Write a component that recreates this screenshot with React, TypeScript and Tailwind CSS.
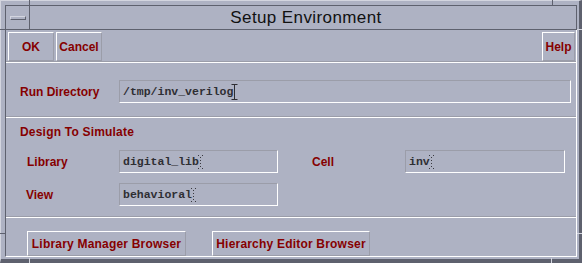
import React from "react";

const label = "font-['Liberation_Sans',Arial,sans-serif] font-bold text-[12px] text-[#860000] leading-none";
const mono = "font-['Liberation_Mono','Courier_New',monospace] font-bold text-[11.5px] text-[#2e2e33] leading-none";

function Caret({ active }: { active?: boolean }) {
  return (
    <svg width="7" height="16" viewBox="0 0 7 16" className="-ml-[2px] shrink-0">
      {active ? (
        <g stroke="#2e2e33" strokeWidth="1" fill="none">
          <path d="M0.5 0.5h6M3.5 0.5v15M0.5 15.5h6" />
        </g>
      ) : (
        <g fill="#3a3a40">
          <rect x="1" y="1" width="1" height="1" />
          <rect x="5" y="1" width="1" height="1" />
          <rect x="3" y="3" width="1" height="1" />
          <rect x="3" y="6" width="1" height="1" />
          <rect x="3" y="9" width="1" height="1" />
          <rect x="3" y="12" width="1" height="1" />
          <rect x="1" y="14" width="1" height="1" />
          <rect x="5" y="14" width="1" height="1" />
        </g>
      )}
    </svg>
  );
}

function Field({ value, className, active }: { value: string; className: string; active?: boolean }) {
  return (
    <div
      className={`h-[23px] flex items-center pl-[3px] border border-t-[#9b9da9] border-l-[#9b9da9] border-r-white border-b-white ${className}`}
    >
      <span className={mono}>{value}</span>
      <Caret active={active} />
    </div>
  );
}

function Btn({ children, className }: { children: React.ReactNode; className: string }) {
  return (
    <button
      className={`flex items-center justify-center border border-t-white border-l-white border-r-[#9b9da9] border-b-[#9b9da9] ${label} ${className}`}
    >
      {children}
    </button>
  );
}

function Sep() {
  return <div className="h-[2px] border-t border-t-[#9b9da9] border-b border-b-white" />;
}

export default function App() {
  return (
    <div className="relative w-[582px] h-[263px] bg-[#aeb2c3] border-t border-l border-t-[#d3d5df] border-l-[#d3d5df] border-r-[3px] border-b-[4px] border-r-[#5e616e] border-b-[#5e616e] pl-[4px] pt-[4px] pr-[2px] pb-[2px] select-none">
      {/* frame corner marks */}
      <div className="absolute left-[28px] top-[-1px] w-px h-[5px] bg-[#5e616e]" />
      <div className="absolute left-[551px] top-[-1px] w-px h-[5px] bg-[#5e616e]" />
      <div className="absolute left-[-1px] top-[28px] w-[5px] h-px bg-[#5e616e]" />
      <div className="absolute right-[-3px] top-[28px] w-[5px] h-px bg-[#d3d5df]" />
      <div className="absolute left-[-1px] top-[232px] w-[5px] h-px bg-[#5e616e]" />
      <div className="absolute right-[-3px] top-[232px] w-[5px] h-px bg-[#d3d5df]" />
      <div className="absolute left-[28px] bottom-[-4px] w-px h-[5px] bg-[#d3d5df]" />
      <div className="absolute left-[550px] bottom-[-4px] w-px h-[5px] bg-[#d3d5df]" />

      {/* title bar */}
      <div className="h-[25px] flex border border-[#5e616e]">
        <div className="w-[24px] flex items-center justify-center border-r border-r-[#5e616e]">
          <div className="w-[16px] h-[4px] border border-t-[#d3d5df] border-l-[#d3d5df] border-r-[#5e616e] border-b-[#5e616e]" />
        </div>
        <div className="flex-1 flex items-center justify-center pl-[6px] font-['Liberation_Sans',Arial,sans-serif] text-[17px] text-[#111] tracking-[0.4px]">
          Setup Environment
        </div>
      </div>

      {/* client area */}
      <div className="h-[227px] flex flex-col border-l border-l-[#5e616e] border-r border-r-white border-b border-b-white">
        <div className="flex justify-between pt-[2px] pl-[2px] pr-[1px] h-[31px]">
          <div className="flex gap-[2px]">
            <Btn className="w-[46px] h-[29px]">OK</Btn>
            <Btn className="w-[46px] h-[29px]">Cancel</Btn>
          </div>
          <Btn className="w-[33px] h-[29px]">Help</Btn>
        </div>
        <Sep />

        <div className="flex items-center h-[53px] pt-[4px]">
          <div className={`w-[113px] pl-[14px] ${label}`}>Run Directory</div>
          <Field value="/tmp/inv_verilog" active className="w-[452px]" />
        </div>
        <Sep />

        <div className="h-[98px] flex flex-col">
          <div className={`pl-[14px] pt-[8px] h-[32px] ${label} tracking-[0.2px]`}>Design To Simulate</div>
          <div className="flex items-center h-[23px]">
            <div className={`w-[113px] pl-[21px] ${label}`}>Library</div>
            <Field value="digital_lib" className="w-[159px]" />
            <div className={`w-[127px] pl-[34px] ${label}`}>Cell</div>
            <Field value="inv" className="w-[160px]" />
          </div>
          <div className="flex items-center h-[23px] mt-[10px]">
            <div className={`w-[113px] pl-[20px] ${label}`}>View</div>
            <Field value="behavioral" className="w-[159px]" />
          </div>
        </div>
        <Sep />

        <div className="flex gap-[26px] pl-[21px] pt-[13px]">
          <Btn className="w-[159px] h-[25px] text-[12.5px] tracking-[0.2px]">Library Manager Browser</Btn>
          <Btn className="w-[158px] h-[25px] text-[12.5px] tracking-[0.2px]">Hierarchy Editor Browser</Btn>
        </div>
      </div>
    </div>
  );
}
